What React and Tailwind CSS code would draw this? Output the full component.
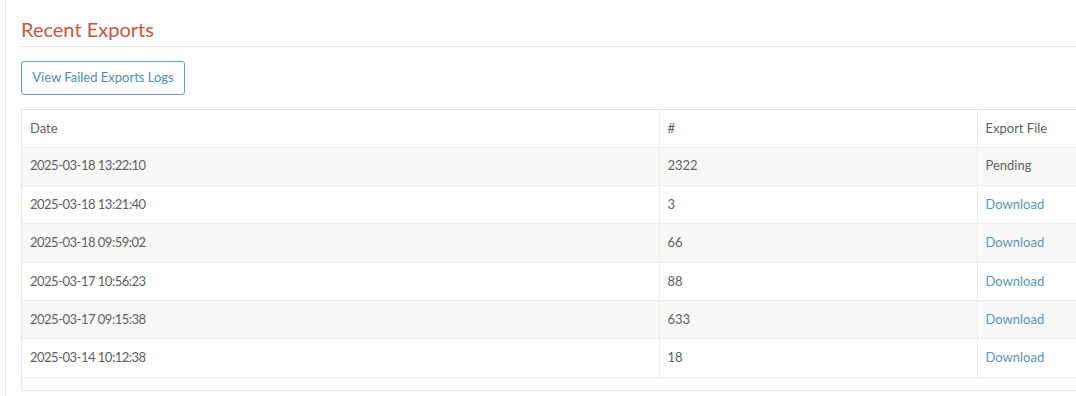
import React from 'react';

const rows = [
  { date: '2025-03-18 13:22:10', count: '2322', file: null },
  { date: '2025-03-18 13:21:40', count: '3', file: 'Download' },
  { date: '2025-03-18 09:59:02', count: '66', file: 'Download' },
  { date: '2025-03-17 10:56:23', count: '88', file: 'Download' },
  { date: '2025-03-17 09:15:38', count: '633', file: 'Download' },
  { date: '2025-03-14 10:12:38', count: '18', file: 'Download' },
];

export default function App() {
  return (
    <div className="h-[396px] w-[1076px] overflow-hidden bg-white font-['Lato','Liberation_Sans',sans-serif] text-[#606060]">
      <div className="ml-[5px] h-full border-l border-[#e3e7ec] pl-[15px] pt-[17px]">
        {/* heading */}
        <h2 className="w-[1300px] border-b border-[#e2e2e2] pb-[5px] text-[20px] leading-[24px] text-[#c65743]">
          Recent Exports
        </h2>

        <button className="mt-[14px] h-[34px] w-[164px] rounded-[3px] border border-[#6a9fae] bg-white text-[13px] text-[#5390a8]">
          View Failed Exports Logs
        </button>

        {/* exports table */}
        <div className="mt-[14px] w-[1300px] border border-[#e6e6e6] pb-[12px]">
          <table className="w-full border-collapse text-[13px]">
            <colgroup>
              <col className="w-[637px]" />
              <col className="w-[318px]" />
              <col />
            </colgroup>
            <thead>
              <tr className="h-[37px] bg-white">
                <th className="border-r border-b border-[#ececec] px-[8px] text-left font-normal">Date</th>
                <th className="border-r border-b border-[#ececec] px-[8px] text-left font-normal">#</th>
                <th className="border-b border-[#ececec] px-[8px] text-left font-normal">Export File</th>
              </tr>
            </thead>
            <tbody>
              {rows.map((row, i) => (
                <tr key={row.date} className={i % 2 === 0 ? 'h-[38.4px] bg-[#f9f9f9]' : 'h-[38.4px] bg-white'}>
                  <td className="border-r border-b border-[#ececec] px-[8px] tracking-[-0.5px]">{row.date}</td>
                  <td className="border-r border-b border-[#ececec] px-[8px]">{row.count}</td>
                  <td className="border-b border-[#ececec] px-[8px]">
                    {row.file ? <a className="text-[#5a95b3]">{row.file}</a> : 'Pending'}
                  </td>
                </tr>
              ))}
            </tbody>
          </table>
        </div>
      </div>
    </div>
  );
}
